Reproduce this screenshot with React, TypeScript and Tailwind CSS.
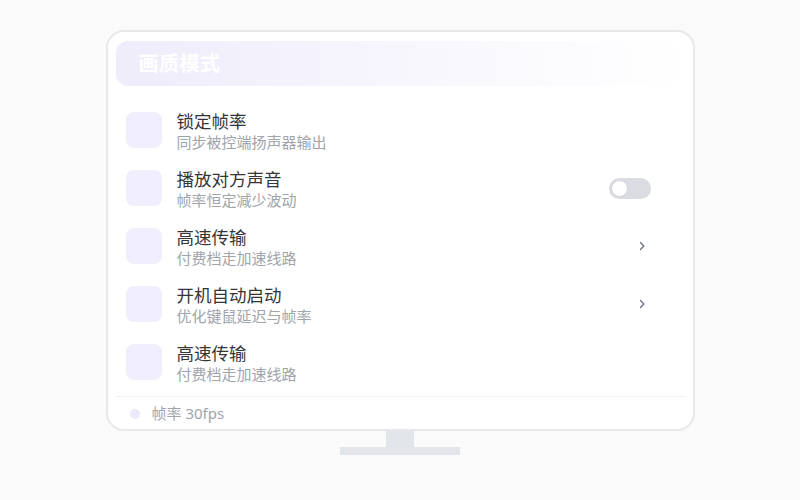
import React from 'react';

type Trailing = 'none' | 'toggle' | 'chevron';

interface SettingRow {
  title: string;
  desc: string;
  trailing: Trailing;
}

const rows: SettingRow[] = [
  { title: '锁定帧率', desc: '同步被控端扬声器输出', trailing: 'none' },
  { title: '播放对方声音', desc: '帧率恒定减少波动', trailing: 'toggle' },
  { title: '高速传输', desc: '付费档走加速线路', trailing: 'chevron' },
  { title: '开机自动启动', desc: '优化键鼠延迟与帧率', trailing: 'chevron' },
  { title: '高速传输', desc: '付费档走加速线路', trailing: 'none' },
];

function Toggle() {
  return (
    <div className="w-[42px] h-[21px] rounded-full bg-[#dadce1] p-[2px] flex items-center">
      <div className="w-[17px] h-[17px] rounded-full bg-white border border-[#d1d4da]" />
    </div>
  );
}

function Chevron() {
  return (
    <svg width="8" height="12" viewBox="0 0 8 12" fill="none">
      <path d="M2.5 2.5 L5.8 6 L2.5 9.5" stroke="#6b7280" strokeWidth="1.3" strokeLinecap="round" strokeLinejoin="round" />
    </svg>
  );
}

function Row({ row }: { row: SettingRow }) {
  return (
    <div className="h-[58px] flex items-center pl-[10px]">
      <div className="w-9 h-9 rounded-lg bg-[#f0edfc] shrink-0" />
      <div className="ml-[15px] flex-1 flex flex-col mt-[1px]">
        <span className="text-[17.5px] leading-[22px] text-[#363636]">{row.title}</span>
        <span className="text-[15px] leading-[20px] text-[#a0a4ab]">{row.desc}</span>
      </div>
      <div className="w-[80px] flex items-center justify-end pr-[34px]">
        {row.trailing === 'toggle' && <Toggle />}
        {row.trailing === 'chevron' && (
          <div className="pr-[5px]">
            <Chevron />
          </div>
        )}
      </div>
    </div>
  );
}

export default function App() {
  return (
    <div
      className="w-[800px] h-[500px] bg-[#fafafa] flex flex-col items-center pt-[30px]"
      style={{ fontFamily: '"Noto Sans", "Noto Sans CJK SC", sans-serif' }}
    >
      {/* 显示器屏幕 */}
      <div className="w-[589px] h-[401px] bg-white border-2 border-[#e6e8eb] rounded-[18px] px-2 pt-[9px] flex flex-col">
        <div className="h-[45px] rounded-xl bg-gradient-to-r from-[#efecfb] via-[#f7f6fd] to-white flex items-center pl-[23px]">
          <span className="text-[20px] font-semibold text-white tracking-wide">画质模式</span>
        </div>

        <div className="mt-[15px] flex flex-col">
          {rows.map((row, i) => (
            <Row key={i} row={row} />
          ))}
        </div>

        <div className="mt-[5px] border-t border-[#eef0f2] flex-1 flex items-center pl-[14px] pt-[1px]">
          <div className="w-[10px] h-[10px] rounded-full bg-[#ece9fb]" />
          <span className="ml-3 text-[15px] text-[#a0a4ab]">帧率 30fps</span>
        </div>
      </div>

      {/* 支架 */}
      <div className="w-[28px] h-[16px] bg-[#e2e5e9]" />
      <div className="w-[120px] h-[8px] bg-[#e2e5e9]" />
    </div>
  );
}
